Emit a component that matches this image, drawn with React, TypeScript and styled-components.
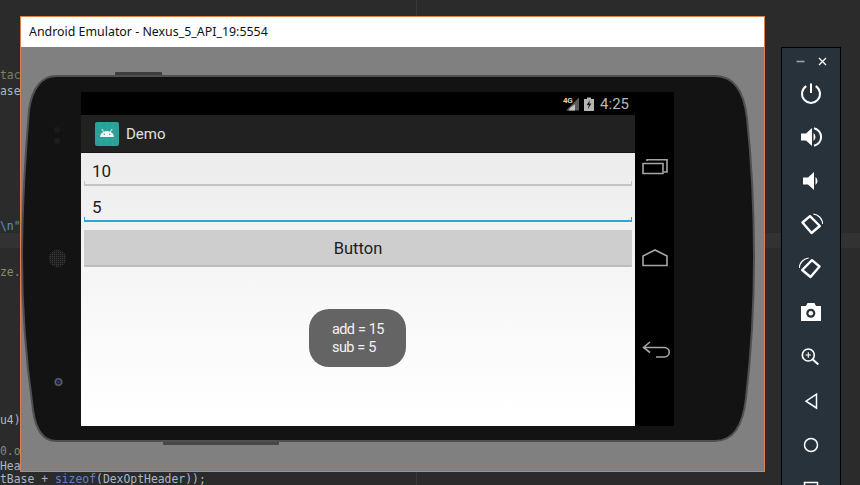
import React from "react";
import styled, { createGlobalStyle } from "styled-components";

const GlobalStyle = createGlobalStyle`
  html, body {
    margin: 0;
    padding: 0;
    background: #2b2b2b;
  }
`;

const codeLines = [
  { top: 69, left: 0, color: "#7f7f62", text: "tach" },
  { top: 85, left: 0, color: "#a9b7c6", text: "ase_" },
  { top: 220, left: 0, color: "#5f8fc0", text: "\\n\"," },
  { top: 266, left: 0, color: "#8a8a6a", text: "ze.i" },
  { top: 414, left: 0, color: "#a9b7c6", text: "u4)" },
  { top: 445, left: 0, color: "#8a8a70", text: "0.op" },
  { top: 460, left: 0, color: "#a9b7c6", text: "Head" },
];

const PhoneShell = () => (
  <ShellSvg width="743" height="423" viewBox="21 47 743 423">
    <defs>
      <pattern id="mesh" width="2" height="2" patternUnits="userSpaceOnUse">
        <rect width="1" height="1" fill="#3c3c3c" />
      </pattern>
      <radialGradient id="lens">
        <stop offset="0" stop-color="#2a3a9a" />
        <stop offset="0.4" stop-color="#1a2040" />
        <stop offset="0.7" stop-color="#666" />
        <stop offset="1" stop-color="#222" />
      </radialGradient>
    </defs>
    <rect x="115" y="72" width="47" height="5" rx="1" fill="#3d3d3d" />
    <rect x="163" y="440" width="116" height="5" rx="1" fill="#474747" />
    <path
      d="M56 76 L715 76 C734 76 744 92 747 118 C752 165 754 215 754 258 C754 305 751 355 746 398 C743 426 733 441 715 441 L56 441 C44 441 36 431 33 410 C26 360 22 310 22 258 C22 205 25 160 29 110 C32 88 42 76 56 76 Z"
      fill="#131313"
      stroke="#505050"
      stroke-width="2"
    />
    <circle cx="57" cy="130" r="3" fill="#1b1b1b" />
    <circle cx="57" cy="141" r="3" fill="#1e1e1e" />
    <circle cx="57.5" cy="258.5" r="9" fill="#1c1c1c" />
    <circle cx="57.5" cy="258.5" r="8.5" fill="url(#mesh)" />
    <circle cx="58.5" cy="382" r="4.5" fill="url(#lens)" />
  </ShellSvg>
);

const AppIcon = () => (
  <svg width="24" height="24" viewBox="0 0 24 24">
    <rect width="24" height="24" rx="2" fill="#2aa198" />
    <path d="M0 6h24M0 12h24M0 18h24M6 0v24M12 0v24M18 0v24" stroke="#3bada4" stroke-width="0.5" />
    <path d="M5 15a7 6 0 0 1 14 0z" fill="#f4f4f4" />
    <path d="M6.800 7l2 2.800M17.200 7l-2 2.800" stroke="#f4f4f4" stroke-width="1" />
    <circle cx="9.300" cy="12.300" r="0.800" fill="#2aa198" />
    <circle cx="14.700" cy="12.300" r="0.800" fill="#2aa198" />
  </svg>
);

const SignalIcon = () => (
  <svg width="15" height="14" viewBox="0 0 15 14">
    <path d="M14 0.500V13.500H1z" fill="#5a5a5a" />
    <path d="M10 7.200V13.500H3.500L5 11z" fill="#c4c4c4" />
  </svg>
);

const BatteryIcon = () => (
  <svg width="10" height="14" viewBox="0 0 10 14">
    <path d="M3 0.500h4v1.500h3v12H0V2h3z" fill="#b5b5b5" />
    <path d="M6 3L2.600 8h2.200L3.800 12.200 7.400 6.600H5.200z" fill="#1a1a1a" />
  </svg>
);

const RecentsIcon = () => (
  <NavSvg width="26" height="18" viewBox="0 0 26 18">
    <path d="M1 6.500h20v10H1z M5 4V2.800h20V15h-3" />
  </NavSvg>
);

const HomeIcon = () => (
  <NavSvg width="26" height="18" viewBox="0 0 26 18">
    <path d="M1 16.500V7L13 1l12 6v9.500z" />
  </NavSvg>
);

const BackIcon = () => (
  <NavSvg width="29" height="18" viewBox="0 0 29 18">
    <path d="M8 1L1.500 6.500 8 11.500M2 6.500h20c7 0 7 9.500 0 9.500h-8" />
  </NavSvg>
);

const PowerIcon = () => (
  <svg width="24" height="24" viewBox="0 0 24 24">
    <path
      d="M7.300 5.200a9 9 0 1 0 9.400 0M12 2.500v9.500"
      fill="none"
      stroke="#fff"
      stroke-width="2"
    />
  </svg>
);

const VolumeUpIcon = () => (
  <svg width="24" height="24" viewBox="0 0 24 24">
    <path d="M2 8.500h5L13 3v18l-6-5.500H2z" fill="#fff" />
    <path d="M14.500 8a5 5 0 0 1 0 8z" fill="#fff" />
    <path d="M15 3.200a9 9 0 0 1 0 17.600" fill="none" stroke="#fff" stroke-width="2" />
  </svg>
);

const VolumeDownIcon = () => (
  <svg width="24" height="24" viewBox="0 0 24 24">
    <path d="M4 8.500h5L15 3v18l-6-5.500H4z" fill="#fff" />
    <path d="M16.500 8a5 5 0 0 1 0 8z" fill="#fff" />
  </svg>
);

const RotateIcon = ({ $mirror }: { $mirror?: boolean }) => (
  <RotateSvg $mirror={$mirror} width="24" height="24" viewBox="0 0 24 24">
    <path
      d="M11 3.200L3.500 9.500 12.500 20 20.800 13z"
      fill="none"
      stroke="#fff"
      stroke-width="2.400"
      stroke-linejoin="round"
    />
    <path d="M14.300 1a10.500 10.500 0 0 1 9.400 10" fill="none" stroke="#fff" stroke-width="1.200" />
  </RotateSvg>
);

const CameraIcon = () => (
  <svg width="24" height="24" viewBox="0 0 24 24">
    <path d="M2 5h5l1.500-3h7L17 5h5v15H2z" fill="#fff" />
    <circle cx="11.800" cy="12.300" r="4.500" fill="#27323a" />
    <circle cx="11.800" cy="12.300" r="2.300" fill="#fff" />
  </svg>
);

const ZoomIcon = () => (
  <svg width="24" height="24" viewBox="0 0 24 24">
    <circle cx="9.300" cy="10" r="6" fill="none" stroke="#fff" stroke-width="1.700" />
    <path d="M13.800 14.500l5.500 5" stroke="#fff" stroke-width="2" />
    <path d="M6.600 10h5.400M9.300 7.300v5.400" stroke="#fff" stroke-width="1.100" />
  </svg>
);

const BackNavIcon = () => (
  <svg width="24" height="24" viewBox="0 0 24 24">
    <path d="M17.500 5.200V19L7 12.200z" fill="none" stroke="#fff" stroke-width="1.500" />
  </svg>
);

const CircleIcon = () => (
  <svg width="24" height="24" viewBox="0 0 24 24">
    <circle cx="12" cy="12" r="6.500" fill="none" stroke="#fff" stroke-width="1.500" />
  </svg>
);

const SquareIcon = () => (
  <svg width="24" height="24" viewBox="0 0 24 24">
    <rect x="5.500" y="5.500" width="13" height="13" fill="none" stroke="#fff" stroke-width="1.500" />
  </svg>
);

const MinimizeIcon = () => (
  <svg width="9" height="9" viewBox="0 0 9 9">
    <path d="M0.500 4.500h8" stroke="#9aa2a6" stroke-width="1.600" />
  </svg>
);

const CloseIcon = () => (
  <svg width="9" height="9" viewBox="0 0 9 9">
    <path d="M1 1l7 7M8 1l-7 7" stroke="#fff" stroke-width="1.300" />
  </svg>
);

const App = () => (
  <Page>
    <GlobalStyle />
    <EditorRule />
    <CurrentLine />
    {codeLines.map((line) => (
      <CodeLine key={line.top} $top={line.top} $left={line.left} $color={line.color}>
        {line.text}
      </CodeLine>
    ))}
    <CodeLine $top={473} $left={0} $color="#a9b7c6">
      tBase + <Keyword>sizeof</Keyword>(DexOptHeader));
    </CodeLine>

    <EmulatorWindow>
      <TitleBar>Android Emulator - Nexus_5_API_19:5554</TitleBar>
      <Viewport>
        <PhoneShell />
        <Screen>
          <StatusBar>
            <NetworkBadge>4G</NetworkBadge>
            <SignalIcon />
            <BatteryIcon />
            <Clock>4:25</Clock>
          </StatusBar>
          <ScreenBody>
            <AppColumn>
              <ActionBar>
                <AppIcon />
                <AppTitle>Demo</AppTitle>
              </ActionBar>
              <Content>
                <Field>
                  <FieldValue>10</FieldValue>
                  <FieldLine />
                </Field>
                <Field>
                  <FieldValue>5</FieldValue>
                  <FieldLine $focused />
                </Field>
                <ActionButton>Button</ActionButton>
                <Toast>
                  <div>add = 15</div>
                  <div>sub = 5</div>
                </Toast>
              </Content>
            </AppColumn>
            <NavBar>
              <RecentsIcon />
              <HomeIcon />
              <BackIcon />
            </NavBar>
          </ScreenBody>
        </Screen>
      </Viewport>
    </EmulatorWindow>

    <ToolPanel>
      <ToolHeader>
        <MinimizeIcon />
        <CloseIcon />
      </ToolHeader>
      <ToolButton><PowerIcon /></ToolButton>
      <ToolButton><VolumeUpIcon /></ToolButton>
      <ToolButton><VolumeDownIcon /></ToolButton>
      <ToolButton><RotateIcon /></ToolButton>
      <ToolButton><RotateIcon $mirror /></ToolButton>
      <ToolButton><CameraIcon /></ToolButton>
      <ToolButton><ZoomIcon /></ToolButton>
      <ToolButton><BackNavIcon /></ToolButton>
      <ToolButton><CircleIcon /></ToolButton>
      <ToolButton><SquareIcon /></ToolButton>
    </ToolPanel>
  </Page>
);

const Page = styled.div`
  position: relative;
  display: flex;
  align-items: flex-start;
  width: 860px;
  height: 485px;
  padding: 16px 0 0 20px;
  box-sizing: border-box;
  overflow: hidden;
  background: #2b2b2b;
`;

const EditorRule = styled.div`
  position: absolute;
  top: 0;
  left: 416px;
  width: 1px;
  height: 100%;
  background: #393939;
`;

const CurrentLine = styled.div`
  position: absolute;
  top: 233px;
  left: 0;
  width: 100%;
  height: 15px;
  background: #323232;
`;

const CodeLine = styled.div<{ $top: number; $left: number; $color: string }>`
  position: absolute;
  top: ${(p) => p.$top}px;
  left: ${(p) => p.$left}px;
  color: ${(p) => p.$color};
  font: 11.4px/12px "DejaVu Sans Mono", monospace;
  white-space: pre;
`;

const Keyword = styled.span`
  color: #5c84c4;
`;

const EmulatorWindow = styled.div`
  position: relative;
  flex: none;
  width: 745px;
  height: 456px;
  box-sizing: border-box;
  border: 1px solid #d8814a;
  background: #808080;
`;

const TitleBar = styled.div`
  height: 30px;
  padding-left: 8px;
  background: #fff;
  color: #111;
  font: 12.4px/30px "Noto Sans", sans-serif;
`;

const Viewport = styled.div`
  position: relative;
  height: 423px;
  padding: 45px 0 0 60px;
  box-sizing: border-box;
  overflow: hidden;
  background: #808080;
`;

const ShellSvg = styled.svg`
  position: absolute;
  top: 0;
  left: 0;
`;

const Screen = styled.div`
  position: relative;
  display: flex;
  flex-direction: column;
  width: 593px;
  height: 334px;
  background: #000;
`;

const StatusBar = styled.div`
  position: relative;
  display: flex;
  align-items: center;
  justify-content: flex-end;
  gap: 4px;
  width: 554px;
  height: 23px;
  padding-right: 6px;
  box-sizing: border-box;
`;

const NetworkBadge = styled.span`
  position: absolute;
  top: 4px;
  left: 482px;
  color: #cfcfcf;
  font: bold 8px/9px "Roboto", sans-serif;
  letter-spacing: -0.3px;
`;

const Clock = styled.span`
  margin-left: 2px;
  color: #b8b8b8;
  font: 15px/18px "Roboto", sans-serif;
`;

const ScreenBody = styled.div`
  display: flex;
  flex: 1;
  min-height: 0;
`;

const AppColumn = styled.div`
  display: flex;
  flex-direction: column;
  width: 554px;
`;

const ActionBar = styled.div`
  display: flex;
  align-items: center;
  gap: 7px;
  height: 38px;
  padding-left: 14px;
  box-sizing: border-box;
  border-bottom: 1px solid #161616;
  background: #212121;
`;

const AppTitle = styled.span`
  padding-top: 1px;
  color: #e0e0e0;
  font: 15px/20px "Roboto", sans-serif;
`;

const Content = styled.div`
  display: flex;
  flex: 1;
  flex-direction: column;
  padding: 0 3px;
  background: linear-gradient(#ececec 0%, #f6f6f6 45%, #fff 95%);
`;

const Field = styled.div`
  display: flex;
  flex-direction: column;
  height: 33px;
  margin-bottom: 3px;
`;

const FieldValue = styled.div`
  flex: 1;
  padding: 8px 0 0 8px;
  color: #1c1c1c;
  font: 17px/20px "Roboto", sans-serif;
`;

const FieldLine = styled.div<{ $focused?: boolean }>`
  height: 3px;
  border: 1px solid ${(p) => (p.$focused ? "#2ba6d9" : "#c4c4c4")};
  border-width: 0 1px 2px;
`;

const ActionButton = styled.div`
  height: 37px;
  margin-top: 5px;
  box-sizing: border-box;
  border-radius: 1px;
  border-bottom: 2px solid #bcbcbc;
  background: #cecece;
  color: #1c1c1c;
  font: 16.5px/37px "Roboto", sans-serif;
  text-align: center;
`;

const Toast = styled.div`
  align-self: center;
  width: 97px;
  height: 58px;
  margin: 42px 0 0 -1px;
  padding: 12px 0 0 23px;
  box-sizing: border-box;
  border-radius: 20px;
  background: #646464;
  color: #f2f2f2;
  font: 14.5px/18px "Roboto", sans-serif;
  letter-spacing: -0.6px;
  word-spacing: 0.5px;
`;

const NavBar = styled.div`
  display: flex;
  flex-direction: column;
  gap: 74px;
  width: 39px;
  padding: 42px 0 0 7px;
  box-sizing: border-box;
`;

const NavSvg = styled.svg`
  flex: none;
  fill: none;
  stroke: #a6a6a6;
  stroke-width: 1.6;
`;

const ToolPanel = styled.div`
  position: relative;
  flex: none;
  width: 60px;
  height: 480px;
  margin: 31px 0 0 16px;
  box-sizing: border-box;
  border: 1px solid #000;
  background: #27323a;
`;

const ToolHeader = styled.div`
  display: flex;
  align-items: center;
  justify-content: center;
  gap: 13px;
  height: 23px;
  padding-top: 3px;
  box-sizing: border-box;
`;

const ToolButton = styled.div`
  display: flex;
  align-items: center;
  justify-content: center;
  height: 44px;
`;

const RotateSvg = styled.svg<{ $mirror?: boolean }>`
  transform: ${(p) => (p.$mirror ? "scaleX(-1)" : "none")};
`;

export default App;
